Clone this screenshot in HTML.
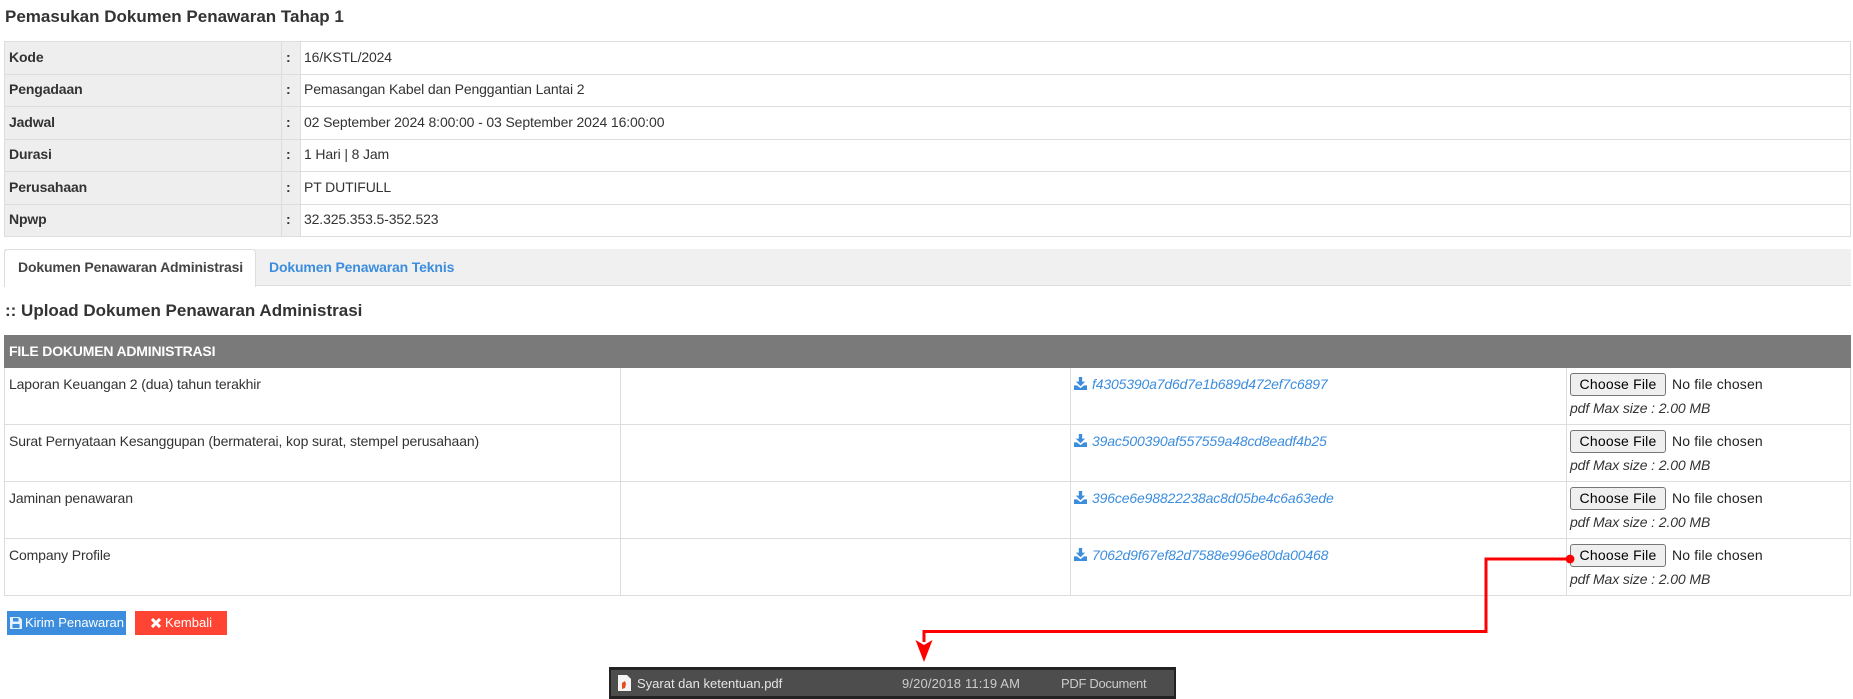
<!DOCTYPE html>
<html><head><meta charset="utf-8"><title>Pemasukan Dokumen Penawaran</title>
<style>
html,body{margin:0;padding:0;background:#fff}
body{width:1853px;height:699px;position:relative;overflow:hidden;font-family:"Liberation Sans",Arial,sans-serif;font-size:14px;color:#333}
.a{position:absolute;white-space:nowrap}
.b{position:absolute;background:#ddd}
.t{line-height:20px;letter-spacing:-.13px}
a{color:#3c8dde;text-decoration:none}
a.t{left:1092px;font-style:italic;letter-spacing:-.16px}
i.t{left:1570px;letter-spacing:-.1px}
.nf{left:1672px;color:#222;letter-spacing:.15px!important}
.bn{position:absolute;box-sizing:border-box;width:96px;height:23px;left:1570px;background:#efefef;border:1px solid #767676;border-radius:3px;color:#000;font-size:14px;line-height:21px;text-align:center;letter-spacing:.2px}
</style></head><body>
<div class="a t" style="left:5px;top:7px;font-size:17px;font-weight:bold;color:#333;letter-spacing:0">Pemasukan Dokumen Penawaran Tahap 1</div>

<div class="a" style="left:4px;top:41px;width:278px;height:196px;background:#eee"></div>
<div class="a" style="left:282px;top:41px;width:19px;height:196px;background:#eee"></div>
<div class="b" style="left:4px;top:41px;width:1847px;height:1px"></div>
<div class="b" style="left:4px;top:74px;width:1847px;height:1px"></div>
<div class="b" style="left:4px;top:106px;width:1847px;height:1px"></div>
<div class="b" style="left:4px;top:139px;width:1847px;height:1px"></div>
<div class="b" style="left:4px;top:171px;width:1847px;height:1px"></div>
<div class="b" style="left:4px;top:204px;width:1847px;height:1px"></div>
<div class="b" style="left:4px;top:236px;width:1847px;height:1px"></div>
<div class="b" style="left:4px;top:41px;width:1px;height:196px"></div>
<div class="b" style="left:281px;top:41px;width:1px;height:196px"></div>
<div class="b" style="left:300px;top:41px;width:1px;height:196px"></div>
<div class="b" style="left:1850px;top:41px;width:1px;height:196px"></div>

<b class="a t" style="left:9px;top:47px">Kode</b><b class="a t" style="left:286px;top:47px">:</b><span class="a t" style="left:304px;top:47px">16/KSTL/2024</span>
<b class="a t" style="left:9px;top:79px">Pengadaan</b><b class="a t" style="left:286px;top:79px">:</b><span class="a t" style="left:304px;top:79px">Pemasangan Kabel dan Penggantian Lantai 2</span>
<b class="a t" style="left:9px;top:112px">Jadwal</b><b class="a t" style="left:286px;top:112px">:</b><span class="a t" style="left:304px;top:112px">02 September 2024 8:00:00 - 03 September 2024 16:00:00</span>
<b class="a t" style="left:9px;top:144px">Durasi</b><b class="a t" style="left:286px;top:144px">:</b><span class="a t" style="left:304px;top:144px">1 Hari | 8 Jam</span>
<b class="a t" style="left:9px;top:177px">Perusahaan</b><b class="a t" style="left:286px;top:177px">:</b><span class="a t" style="left:304px;top:177px">PT DUTIFULL</span>
<b class="a t" style="left:9px;top:209px">Npwp</b><b class="a t" style="left:286px;top:209px">:</b><span class="a t" style="left:304px;top:209px">32.325.353.5-352.523</span>

<div class="a" style="left:4px;top:249px;width:1847px;height:36px;background:#f0f0f0;border-bottom:1px solid #ddd"></div>
<div class="a" style="left:4px;top:249px;width:250px;height:37px;background:#fff;border:1px solid #ddd;border-bottom:0;border-radius:4px 4px 0 0"></div>
<b class="a t" style="left:18px;top:257px;color:#444;letter-spacing:-.16px">Dokumen Penawaran Administrasi</b>
<b class="a t" style="left:269px;top:257px;color:#3c8dde;letter-spacing:-.15px">Dokumen Penawaran Teknis</b>

<b class="a t" style="left:5px;top:301px;font-size:17px;color:#333;letter-spacing:0">:: Upload Dokumen Penawaran Administrasi</b>

<div class="a" style="left:4px;top:335px;width:1847px;height:33px;background:#7a7a7a"></div>
<b class="a t" style="left:9px;top:341px;color:#fff;letter-spacing:-.19px">FILE DOKUMEN ADMINISTRASI</b>
<div class="b" style="left:4px;top:424px;width:1847px;height:1px"></div>
<div class="b" style="left:4px;top:481px;width:1847px;height:1px"></div>
<div class="b" style="left:4px;top:538px;width:1847px;height:1px"></div>
<div class="b" style="left:4px;top:595px;width:1847px;height:1px"></div>
<div class="b" style="left:4px;top:368px;width:1px;height:228px"></div>
<div class="b" style="left:620px;top:368px;width:1px;height:228px"></div>
<div class="b" style="left:1070px;top:368px;width:1px;height:228px"></div>
<div class="b" style="left:1566px;top:368px;width:1px;height:228px"></div>
<div class="b" style="left:1850px;top:368px;width:1px;height:228px"></div>

<svg width="0" height="0" style="position:absolute"><defs><symbol id="dl" viewBox="0 0 14 14"><path fill="#3c8dde" d="M5.2 0h3.6v5H12L7 10 2 5h3.2zM0 9h3.2L7 12l3.8-3H14v5H0z"/></symbol></defs></svg>

<span class="a t" style="left:9px;top:374px">Laporan Keuangan 2 (dua) tahun terakhir</span>
<svg class="a" style="left:1074px;top:377px" width="13" height="13"><use href="#dl"/></svg>
<a class="a t" style="top:374px" href="#">f4305390a7d6d7e1b689d472ef7c6897</a>
<div class="bn" style="top:373px">Choose File</div>
<span class="a t nf" style="top:374px">No file chosen</span>
<i class="a t" style="top:398px">pdf Max size : 2.00 MB</i>

<span class="a t" style="left:9px;top:431px">Surat Pernyataan Kesanggupan (bermaterai, kop surat, stempel perusahaan)</span>
<svg class="a" style="left:1074px;top:434px" width="13" height="13"><use href="#dl"/></svg>
<a class="a t" style="top:431px" href="#">39ac500390af557559a48cd8eadf4b25</a>
<div class="bn" style="top:430px">Choose File</div>
<span class="a t nf" style="top:431px">No file chosen</span>
<i class="a t" style="top:455px">pdf Max size : 2.00 MB</i>

<span class="a t" style="left:9px;top:488px">Jaminan penawaran</span>
<svg class="a" style="left:1074px;top:491px" width="13" height="13"><use href="#dl"/></svg>
<a class="a t" style="top:488px" href="#">396ce6e98822238ac8d05be4c6a63ede</a>
<div class="bn" style="top:487px">Choose File</div>
<span class="a t nf" style="top:488px">No file chosen</span>
<i class="a t" style="top:512px">pdf Max size : 2.00 MB</i>

<span class="a t" style="left:9px;top:545px">Company Profile</span>
<svg class="a" style="left:1074px;top:548px" width="13" height="13"><use href="#dl"/></svg>
<a class="a t" style="top:545px" href="#">7062d9f67ef82d7588e996e80da00468</a>
<div class="bn" style="top:544px">Choose File</div>
<span class="a t nf" style="top:545px">No file chosen</span>
<i class="a t" style="top:569px">pdf Max size : 2.00 MB</i>

<div class="a" style="left:7px;top:611px;width:119px;height:24px;background:#3c8dde"></div>
<svg class="a" style="left:10px;top:617px" width="12" height="12" viewBox="0 0 12 12"><path fill="#e4f0fb" fill-rule="evenodd" d="M0 0h9.5L12 2.5V12H0zM3 1v3.5h5.5V1zM2.5 7v4h7V7z"/></svg>
<span class="a t" style="left:25px;top:613px;color:#fff;font-size:13px;letter-spacing:0">Kirim Penawaran</span>
<div class="a" style="left:135px;top:611px;width:92px;height:24px;background:#ff4433"></div>
<svg class="a" style="left:151px;top:618px" width="10" height="10" viewBox="0 0 10 10"><path stroke="#fff" stroke-width="3" d="M1 1l8 8M9 1l-8 8"/></svg>
<span class="a t" style="left:165px;top:613px;color:#fff;font-size:13px;letter-spacing:0">Kembali</span>

<div class="a" style="left:609px;top:667px;width:567px;height:32px;background:#222"></div>
<div class="a" style="left:611px;top:670px;width:563px;height:26px;background:#4d4d4d"></div>
<svg class="a" style="left:618px;top:675px" width="13" height="16" viewBox="0 0 13 16"><path fill="#f4f4f4" d="M0 0h9l4 4v12H0z"/><path fill="#e8481c" d="M4 8l3-2 1 3-1 4-3 1z"/></svg>
<span class="a t" style="left:637px;top:674px;color:#e6e6e6;font-size:13px;letter-spacing:0">Syarat dan ketentuan.pdf</span>
<span class="a t" style="left:902px;top:674px;color:#ccc;font-size:13px;letter-spacing:.15px">9/20/2018 11:19 AM</span>
<span class="a t" style="left:1061px;top:674px;color:#ccc;font-size:13px;letter-spacing:-.3px">PDF Document</span>

<svg class="a" style="left:0;top:0;pointer-events:none" width="1853" height="699">
<path d="M1570 559H1486V631.5H924V642" fill="none" stroke="#f00" stroke-width="3"/>
<circle cx="1570" cy="559" r="4.4" fill="#f00"/>
<path d="M915.5 640L924 645L932.5 640L924 662Z" fill="#f00"/>
</svg>
</body></html>
